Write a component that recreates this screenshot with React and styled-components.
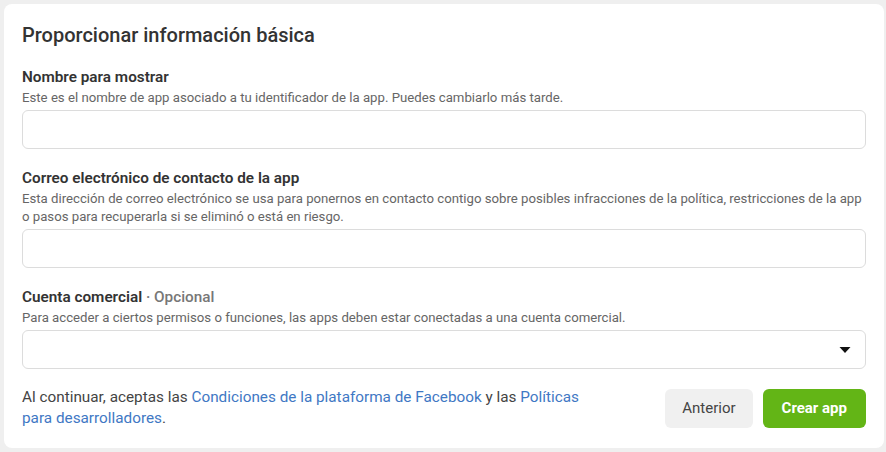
import React from 'react';
import styled, { createGlobalStyle } from 'styled-components';

const GlobalStyle = createGlobalStyle`
    html, body {
        margin: 0;
        padding: 0;
        background: #efefef;
        font-family: Roboto, "Liberation Sans", Arial, sans-serif;
        color: #1c1e21;
    }
    * { box-sizing: border-box; }
`;

const Page = styled.div`
    width: 886px;
    height: 452px;
    padding: 4px 2px 4px 4px;
`;

const Card = styled.section`
    height: 100%;
    background: #fff;
    border-radius: 8px;
    padding: 19px 18px 0 18px;
    display: flex;
    flex-direction: column;
`;

const Title = styled.h2`
    margin: 0 0 20px;
    font-size: 20px;
    line-height: 24px;
    font-weight: 500;
    color: #333;
`;

const Field = styled.div`
    display: flex;
    flex-direction: column;
    margin-bottom: 19px;
`;

const Label = styled.div`
    font-size: 15.3px;
    line-height: 20px;
    font-weight: 600;
    color: #333;
    margin-bottom: 2px;
`;

const Optional = styled.span`
    font-weight: 500;
    color: #777;
`;

const Help = styled.div`
    font-size: 13.2px;
    line-height: 18px;
    color: #666;
    margin-bottom: 3px;
`;

const Input = styled.div`
    height: 39px;
    border: 1px solid #dcdcdc;
    border-radius: 6px;
    background: #fff;
    display: flex;
    align-items: center;
    justify-content: flex-end;
    padding-right: 14px;
`;

const Footer = styled.div`
    display: flex;
    justify-content: space-between;
    align-items: center;
    margin-top: -1px;
`;

const Terms = styled.p`
    margin: 0;
    width: 575px;
    font-size: 15.3px;
    line-height: 21px;
    color: #444;
`;

const Link = styled.a`
    color: #3f78c4;
    text-decoration: none;
`;

const Buttons = styled.div`
    display: flex;
    gap: 10px;
`;

const Button = styled.button`
    height: 39px;
    padding: 0 ${({ primary }) => (primary ? '19px' : '17px')};
    border: none;
    border-radius: 6px;
    font-family: Roboto, "Liberation Sans", Arial, sans-serif;
    font-size: 15px;
    font-weight: ${({ primary }) => (primary ? 700 : 400)};
    color: ${({ primary }) => (primary ? '#fff' : '#444')};
    background: ${({ primary }) => (primary ? '#63b516' : '#f0f0f0')};
    cursor: pointer;
`;

const Caret = () => (
    <svg width="12" height="8" viewBox="0 0 12 8">
        <path d="M0.5 1 L11.5 1 L6 7 Z" fill="#111" />
    </svg>
);

const App = () => (
    <>
        <GlobalStyle />
        <Page>
            <Card>
                <Title>Proporcionar información básica</Title>

                <Field>
                    <Label>Nombre para mostrar</Label>
                    <Help>Este es el nombre de app asociado a tu identificador de la app. Puedes cambiarlo más tarde.</Help>
                    <Input />
                </Field>

                <Field>
                    <Label>Correo electrónico de contacto de la app</Label>
                    <Help>
                        Esta dirección de correo electrónico se usa para ponernos en contacto contigo sobre posibles infracciones de la política, restricciones de la app o pasos para recuperarla si se eliminó o está en riesgo.
                    </Help>
                    <Input />
                </Field>

                <Field>
                    <Label>Cuenta comercial <Optional>· Opcional</Optional></Label>
                    <Help>Para acceder a ciertos permisos o funciones, las apps deben estar conectadas a una cuenta comercial.</Help>
                    <Input>
                        <Caret />
                    </Input>
                </Field>

                <Footer>
                    <Terms>
                        Al continuar, aceptas las <Link href="#">Condiciones de la plataforma de Facebook</Link> y las <Link href="#">Políticas para desarrolladores</Link>.
                    </Terms>
                    <Buttons>
                        <Button>Anterior</Button>
                        <Button primary>Crear app</Button>
                    </Buttons>
                </Footer>
            </Card>
        </Page>
    </>
);

export default App;
